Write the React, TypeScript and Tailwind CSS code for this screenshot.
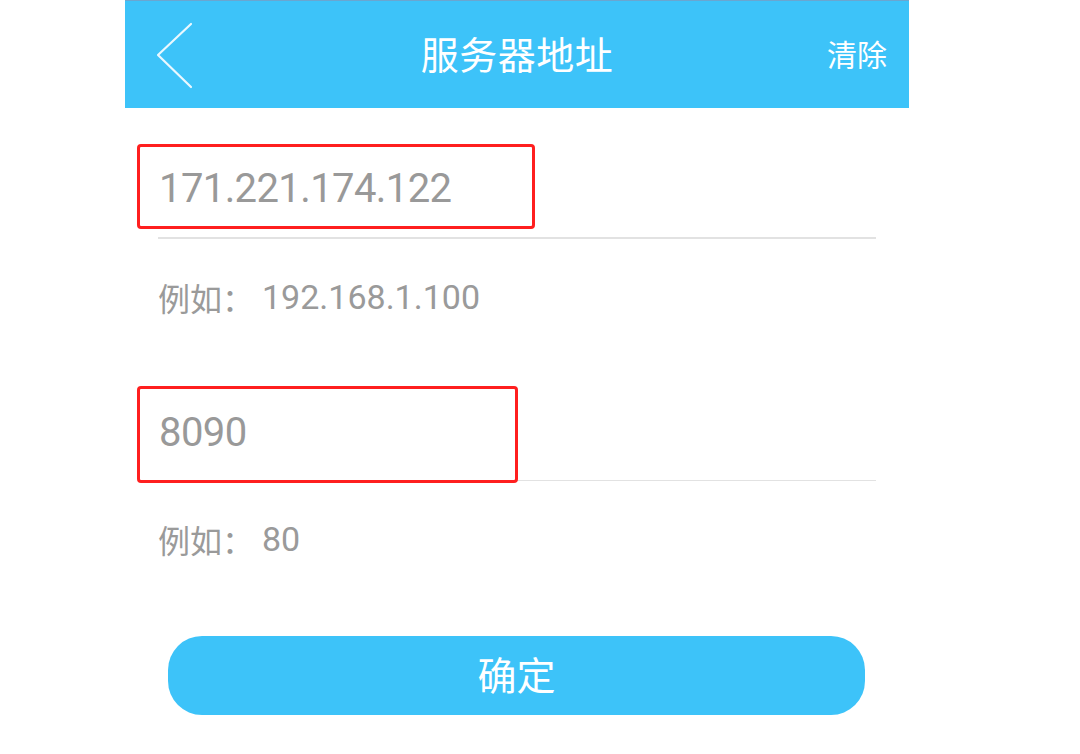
import React from "react";

const FONT = '"Roboto", "Noto Sans CJK SC", sans-serif';
const CJK = '"Noto Sans CJK SC", sans-serif';

export default function App() {
  return (
    <div className="w-[1080px] h-[754px] bg-white overflow-hidden" style={{ fontFamily: FONT }}>
      <div className="ml-[125px] w-[784px] flex flex-col">
        {/* Header */}
        <div className="h-[108px] bg-[#3dc3f9] border-t border-[#6aa6d0] flex items-center">
          <div className="w-[120px] h-full flex items-center pl-[31px]">
            <svg width="40" height="70" viewBox="0 0 40 70" fill="none">
              <path d="M35 4 L2 35 L35 67" stroke="#eaf8ff" strokeWidth="2.2" strokeLinecap="round" strokeLinejoin="round" />
            </svg>
          </div>
          <div className="flex-1 text-center text-white text-[38px] leading-none tracking-[0.5px] pb-[4px]" style={{ fontFamily: CJK }}>
            服务器地址
          </div>
          <div className="w-[120px] flex justify-end pr-[22px] pb-[4px] text-white text-[30px] leading-none" style={{ fontFamily: CJK }}>
            清除
          </div>
        </div>

        {/* Field 1 */}
        <div className="mt-[33px] relative h-[96px] flex items-center pl-[34px]">
          <div className="absolute left-[12px] top-[3px] w-[398px] h-[85px] border-[3px] border-[#ff1f1f] rounded-[4px]" />
          <span className="text-[40px] leading-none text-[#999999] tracking-[-0.6px]">171.221.174.122</span>
        </div>
        <div className="ml-[33px] w-[718px] h-[1.5px] bg-[#e2e2e2]" />
        <div className="mt-[38px] h-[40px] flex items-center pl-[33px] text-[#9a9a9a]">
          <span className="text-[32px] leading-none" style={{ fontFamily: CJK }}>例如：</span>
          <span className="ml-[8px] text-[34px] leading-none">192.168.1.100</span>
        </div>

        {/* Field 2 */}
        <div className="mt-[69px] relative h-[94px] flex items-center pl-[34px]">
          <div className="absolute left-[12px] top-[0px] w-[381px] h-[97px] border-[3px] border-[#ff1f1f] rounded-[4px] z-10" />
          <span className="text-[40px] leading-none text-[#999999] tracking-[-0.6px]">8090</span>
        </div>
        <div className="ml-[33px] w-[718px] h-[1.5px] bg-[#e2e2e2]" />
        <div className="mt-[38px] h-[40px] flex items-center pl-[33px] text-[#9a9a9a]">
          <span className="text-[32px] leading-none" style={{ fontFamily: CJK }}>例如：</span>
          <span className="ml-[8px] text-[34px] leading-none">80</span>
        </div>

        {/* Button */}
        <button className="mt-[77px] ml-[43px] w-[697px] h-[79px] rounded-[34px] bg-[#3dc3f9] text-white text-[39px] leading-none flex items-center justify-center pb-[5px]" style={{ fontFamily: CJK }}>
          确定
        </button>
      </div>
    </div>
  );
}
